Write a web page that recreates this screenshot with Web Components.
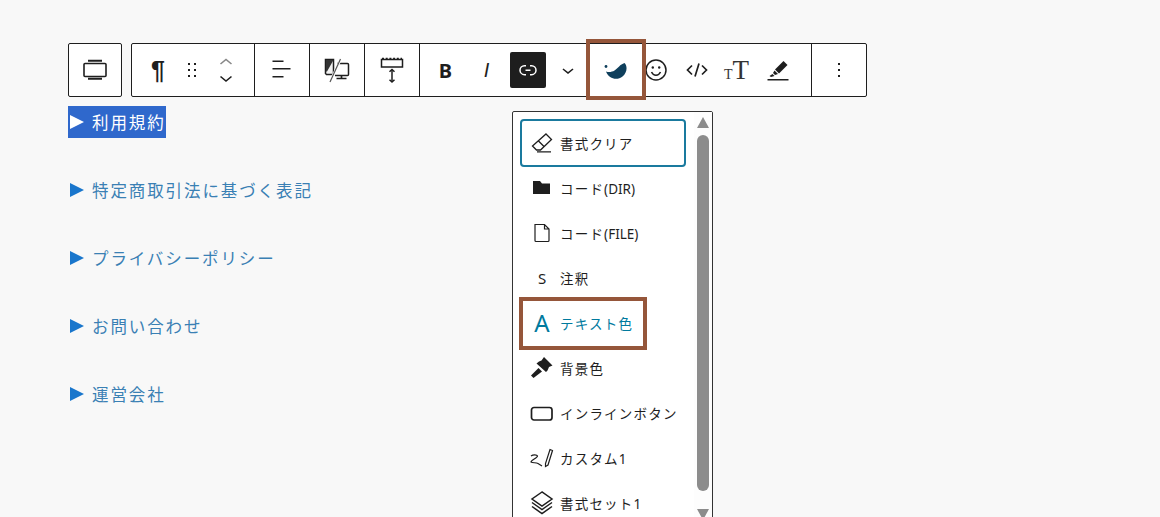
<!DOCTYPE html>
<html lang="ja">
<head>
<meta charset="utf-8">
<title>toolbar</title>
<style>
  html, body { margin: 0; height: 100%; overflow: hidden; }
  body {
    background: #f8f8f8;
    font-family: "Noto Sans CJK JP", "Noto Sans", sans-serif;
    color: #1e1e1e;
  }
  .editor { position: relative; height: 517px; padding: 43px 0 0 68px; box-sizing: border-box; }
</style>
</head>
<body>
<div class="editor">
  <block-toolbar>
    <tool-group slot="first">
      <tool-btn><svg viewBox="0 0 24 24" width="24" height="24" fill="none" stroke="#1e1e1e" stroke-width="1.6" style="margin-left:-1px"><rect x="1" y="5.500" width="22" height="13" rx="1"/><path d="M5 2.800h14M5 20.800h14" stroke-width="2"/></svg></tool-btn>
    </tool-group>
    <tool-group inset>
      <tool-btn><span class="glyph">¶</span></tool-btn>
      <tool-btn><svg viewBox="0 0 24 24" width="24" height="24" fill="#1e1e1e"><path d="M8 7h2V5H8v2zm0 6h2v-2H8v2zm0 6h2v-2H8v2zm6-14v2h2V5h-2zm0 8h2v-2h-2v2zm0 6h2v-2h-2v2z"/></svg></tool-btn>
      <tool-btn><svg viewBox="0 0 24 36" width="24" height="36" fill="none" stroke-width="1.6"><path d="M6.500 12L12 7.500l5.500 4.500" stroke="#888"/><path d="M6.500 24.500L12 29l5.500-4.500" stroke="#1e1e1e"/></svg></tool-btn>
    </tool-group>
    <tool-group>
      <tool-btn wide><svg viewBox="0 0 24 24" width="24" height="24" fill="#1e1e1e"><path d="M2.500 2.500h11V4h-11zM2.500 10h18v1.500h-18zM2.500 18h11v1.500h-11z"/></svg></tool-btn>
    </tool-group>
    <tool-group>
      <tool-btn wide><svg viewBox="0 0 28 28" width="28" height="28"><path d="M2.500 3.500h8v15h-7l-1-1z" fill="#f2f2f2" stroke="#1e1e1e" stroke-width="1.500"/><path d="M3 4h7.500L4 15.500H3z" fill="#333"/><path d="M14 7.500h10.500a1 1 0 0 1 1 1v10a1 1 0 0 1-1 1H12" fill="none" stroke="#1e1e1e" stroke-width="1.500"/><path d="M18.500 20v2M13.500 22.500h10" stroke="#1e1e1e" stroke-width="1.700" fill="none"/><path d="M18 2.500L7 26" stroke="#fff" stroke-width="2.500"/><path d="M17.500 3L7 26" stroke="#555" stroke-width="1.200"/></svg></tool-btn>
    </tool-group>
    <tool-group>
      <tool-btn wide><svg viewBox="0 0 28 28" width="28" height="28" fill="none" stroke="#1e1e1e"><path d="M3.500 3.500h21v7.500h-21z" stroke-width="1.500"/><path d="M4 2.500h20" stroke-width="1.500" stroke-dasharray="2 1.700"/><path d="M14 14v11" stroke-width="1.500"/><path d="M11.500 15.800L14 13.500l2.500 2.300M11.500 23.700L14 26l2.500-2.300" stroke-width="1.500"/></svg></tool-btn>
    </tool-group>
    <tool-group format>
      <tool-btn narrow><span class="bold">B</span></tool-btn>
      <tool-btn narrow><span class="ital">I</span></tool-btn>
      <tool-btn narrow active><svg viewBox="0 0 24 24" width="24" height="24" fill="#fff"><path d="M10 17.389H8.444A5.194 5.194 0 1 1 8.444 7H10v1.500H8.444a3.694 3.694 0 0 0 0 7.389H10v1.500ZM14 7h1.556a5.194 5.194 0 0 1 0 10.390H14v-1.500h1.556a3.694 3.694 0 0 0 0-7.390H14V7Zm-4.500 6h5v-1.500h-5V13Z"/></svg></tool-btn>
      <tool-btn narrow style="margin-left:-1px"><svg viewBox="0 0 24 24" width="24" height="24" fill="#1e1e1e"><path d="M17.500 11.600L12 16l-5.500-4.400.9-1.200L12 14l4.500-3.600 1 1.200z"/></svg></tool-btn>
      <tool-btn splash><svg viewBox="0 0 24 18" width="24" height="18" fill="#0f3f5c"><circle cx="3" cy="5.500" r="1.400"/><path d="M3 10.500C6 11.500 9 11 11.500 9.500 15 7 17 3.500 21.500 2 24.500 4.500 24.500 11.500 19.500 15.500 14.500 19.500 6 18.500 3 10.500z"/></svg></tool-btn>
      <tool-btn narrow><svg viewBox="0 0 24 24" width="24" height="24" fill="none" stroke="#1e1e1e" stroke-width="1.500"><circle cx="12" cy="12" r="10"/><path d="M7.500 14c1 2.200 2.600 3.200 4.500 3.200s3.500-1 4.500-3.200"/><circle cx="8.800" cy="9.500" r="1.200" fill="#1e1e1e" stroke="none"/><circle cx="15.200" cy="9.500" r="1.200" fill="#1e1e1e" stroke="none"/></svg></tool-btn>
      <tool-btn narrow><svg viewBox="0 0 24 24" width="24" height="24" fill="none" stroke="#1e1e1e" stroke-width="1.700"><path d="M7 7.500L2.500 12 7 16.500M17 7.500l4.500 4.500-4.500 4.500M14 5.500l-4 13"/></svg></tool-btn>
      <tool-btn narrow style="margin-left:-1px"><span class="tt"><small style="font-size:14px">T</small>T</span></tool-btn>
      <tool-btn narrow><svg viewBox="0 0 24 24" width="24" height="24" fill="#1e1e1e"><path d="M17.500 3l4 4-8.500 8.500-4-4z"/><path d="M8.500 12.500L12 16l-3 1-2-2z"/><path d="M6.500 16l2 2-3.500 1-1.500-1z"/><rect x="1.500" y="21" width="21" height="1.500"/></svg></tool-btn>
    </tool-group>
    <tool-group>
      <tool-btn wide><svg viewBox="0 0 24 24" width="24" height="24" fill="#1e1e1e"><path d="M13 19h-2v-2h2v2zm0-6h-2v-2h2v2zm0-6h-2V5h2v2z"/></svg></tool-btn>
    </tool-group>
  </block-toolbar>

  <link-list>
    <link-row selected>利用規約</link-row>
    <link-row>特定商取引法に基づく表記</link-row>
    <link-row>プライバシーポリシー</link-row>
    <link-row>お問い合わせ</link-row>
    <link-row>運営会社</link-row>
  </link-list>

  <format-popover>
    <format-item focused label="書式クリア"><svg viewBox="0 0 24 24" width="24" height="24" fill="none" stroke="#1e1e1e" stroke-width="1.300"><path d="M16 3l5.500 5.500L10.500 19H6.500l-4-4zM8 9.500l6 6M7 20.800h14"/></svg></format-item>
    <format-item label="コード(DIR)"><svg viewBox="0 0 24 24" width="24" height="24" fill="#1e1e1e"><path d="M3 5h7l2 2.500h8V18H3z"/></svg></format-item>
    <format-item label="コード(FILE)"><svg viewBox="0 0 24 24" width="24" height="24" fill="none" stroke="#1e1e1e" stroke-width="1.200"><path d="M5 3.500h9.500L19 8v11.500a1 1 0 0 1-1 1H6a1 1 0 0 1-1-1zM14.500 3.500V8H19"/></svg></format-item>
    <format-item label="注釈"><span class="s">S</span></format-item>
    <format-item accent label="テキスト色"><span class="a">A</span></format-item>
    <format-item label="背景色"><svg viewBox="0 0 24 24" width="24" height="24" fill="#1e1e1e"><path d="M14 1l8.500 8.500-3.500 1.500-1.500 3.500-1.500 1.500L6.500 7.500 9 5.500l2.500-1z"/><path d="M8.500 12l3.500 3.500-8.500 6.500L1 19.500z"/></svg></format-item>
    <format-item label="インラインボタン"><svg viewBox="0 0 24 24" width="24" height="24" fill="none" stroke="#1e1e1e" stroke-width="1.700"><rect x="1.500" y="6.500" width="20.500" height="12.500" rx="2.500"/></svg></format-item>
    <format-item label="カスタム1"><svg viewBox="0 0 24 24" width="24" height="24" fill="none" stroke="#1e1e1e" stroke-width="1.200"><path d="M1 10c2-1.500 6-1.500 6.500 0 0 2-6.500 4-6.500 6 1.500 1 5 .5 7 1.500l4 2.500"/><path d="M20 3.500l2.500 1L18 19l-2.500 1.500v-3z"/></svg></format-item>
    <format-item label="書式セット1"><svg viewBox="0 0 24 24" width="24" height="24" fill="none" stroke="#1e1e1e" stroke-width="1.500"><path d="M12 1L2 8l10 7 10-7z"/><path d="M2 11.500l10 7 10-7M2 15.500l10 7 10-7"/></svg></format-item>
  </format-popover>

  <mark-box style="left:586px;top:39px;width:60px;height:61px"></mark-box>
  <mark-box style="left:519px;top:297px;width:128px;height:53px"></mark-box>
</div>

<script>
class BlockToolbar extends HTMLElement {
  connectedCallback() {
    this.attachShadow({ mode: 'open' }).innerHTML = `
      <style>
        :host { display: flex; gap: 9px; height: 54px; }
        .frame { display: flex; background: #fff; border: 1px solid #1e1e1e; border-radius: 2px; }
      </style>
      <slot name="first"></slot>
      <div class="frame"><slot></slot></div>
    `;
  }
}

class ToolGroup extends HTMLElement {
  connectedCallback() {
    this.attachShadow({ mode: 'open' }).innerHTML = `
      <style>
        :host { display: flex; align-items: center; height: 100%; box-sizing: border-box; border-right: 1px solid #1e1e1e; }
        :host(:last-child) { border-right: 0; }
        :host([slot=first]) { background: #fff; border: 1px solid #1e1e1e; border-radius: 2px; width: 54px; justify-content: center; }
        :host([inset]) { padding: 0 11px 0 9px; }
        :host([format]) { padding: 0 13px 0 5px; }
      </style>
      <slot></slot>
    `;
  }
}

class ToolBtn extends HTMLElement {
  connectedCallback() {
    this.attachShadow({ mode: 'open' }).innerHTML = `
      <style>
        :host { display: flex; align-items: center; justify-content: center; width: 34px; height: 36px; color: #1e1e1e; border-radius: 2px; }
        :host([wide]) { width: 54px; }
        :host([narrow]) { width: 41px; }
        :host([splash]) { width: 47px; }
        :host([splash]) ::slotted(svg) { margin-left: 6px; }
        :host([active]) { width: 36px; margin: 0 2.500px; background: #1e1e1e; }
        ::slotted(.glyph) { font: 700 25px "Liberation Sans", sans-serif; }
        ::slotted(.bold) { font: 700 20px "Noto Sans", sans-serif; }
        ::slotted(.ital) { font: italic 400 20px "Liberation Sans", sans-serif; }
        ::slotted(.tt) { font: 400 27px "Liberation Serif", serif; line-height: 1; color: #333; }
      </style>
      <slot></slot>
    `;
  }
}

class LinkList extends HTMLElement {
  connectedCallback() {
    this.attachShadow({ mode: 'open' }).innerHTML = `
      <style>
        :host { display: flex; flex-direction: column; align-items: flex-start; gap: 36.100px; margin-top: 9px; }
      </style>
      <slot></slot>
    `;
  }
}

class LinkRow extends HTMLElement {
  connectedCallback() {
    this.attachShadow({ mode: 'open' }).innerHTML = `
      <style>
        :host { display: flex; align-items: center; gap: 8px; height: 32px; font: 400 16.500px "Noto Sans CJK JP", sans-serif; letter-spacing: 1.900px; color: #3a80b4; }
        :host([selected]) { background: #2f68cc; color: #fff; }
        .tri { margin-left: 2px; width: 0; height: 0; border-left: 14px solid #1976cc; border-top: 7.500px solid transparent; border-bottom: 7.500px solid transparent; }
        :host([selected]) .tri { border-left-color: #fff; }
      </style>
      <span class="tri"></span><slot></slot>
    `;
  }
}

class FormatPopover extends HTMLElement {
  connectedCallback() {
    this.attachShadow({ mode: 'open' }).innerHTML = `
      <style>
        :host { position: absolute; left: 512px; top: 111px; width: 201px; height: 420px; box-sizing: border-box; display: flex; background: #fff; border: 1px solid #333; border-radius: 2px; }
        .items { width: 181px; padding: 7px 0 0 7px; box-sizing: border-box; display: flex; flex-direction: column; }
        .bar { width: 18px; display: flex; flex-direction: column; align-items: center; padding: 5px 1px 0 0; box-sizing: border-box; background: #fdfdfd; }
        .up, .down { width: 0; height: 0; border-left: 6.500px solid transparent; border-right: 6.500px solid transparent; }
        .up { border-bottom: 11px solid #8c8c8c; }
        .down { border-top: 11px solid #8c8c8c; margin-top: 18px; }
        .thumb { width: 12px; height: 356px; margin-top: 7px; background: #8c8c8c; border-radius: 6px; }
      </style>
      <div class="items"><slot></slot></div>
      <div class="bar"><div class="up"></div><div class="thumb"></div><div class="down"></div></div>
    `;
  }
}

class FormatItem extends HTMLElement {
  connectedCallback() {
    // latin parts of a label sit tighter than the kana around them
    const label = this.getAttribute('label').replace(/[A-Z()0-9]+/g, '<span class="latin">$&</span>');
    this.attachShadow({ mode: 'open' }).innerHTML = `
      <style>
        :host { display: flex; align-items: center; gap: 6px; height: 45px; flex: none; width: 166px; box-sizing: border-box; padding-left: 11px; font: 400 13.500px "Noto Sans CJK JP", sans-serif; letter-spacing: 1.200px; color: #1e1e1e; white-space: nowrap; }
        :host([focused]) { height: 48px; margin-bottom: -2px; background: #fff; border: 2px solid #1a7a9e; border-radius: 4px; padding-left: 9px; }
        :host([accent]) { color: #007a9e; }
        .latin { font-family: "Noto Sans", sans-serif; letter-spacing: 0; }
        .icon { width: 24px; height: 24px; margin-left: -1px; display: flex; align-items: center; justify-content: center; flex: none; }
        ::slotted(.s) { font: 400 15px "Noto Sans", sans-serif; color: #1e1e1e; letter-spacing: 0; }
        ::slotted(.a) { font: 400 24px "Noto Sans", sans-serif; color: #007a9e; line-height: 1; letter-spacing: 0; }
      </style>
      <span class="icon"><slot></slot></span><span>${label}</span>
    `;
  }
}

class MarkBox extends HTMLElement {
  connectedCallback() {
    this.attachShadow({ mode: 'open' }).innerHTML = `
      <style>
        :host { position: absolute; box-sizing: border-box; border: 4px solid #95563a; }
      </style>
    `;
  }
}

customElements.define('tool-group', ToolGroup);
customElements.define('tool-btn', ToolBtn);
customElements.define('block-toolbar', BlockToolbar);
customElements.define('link-row', LinkRow);
customElements.define('link-list', LinkList);
customElements.define('format-item', FormatItem);
customElements.define('format-popover', FormatPopover);
customElements.define('mark-box', MarkBox);
</script>
</body>
</html>
